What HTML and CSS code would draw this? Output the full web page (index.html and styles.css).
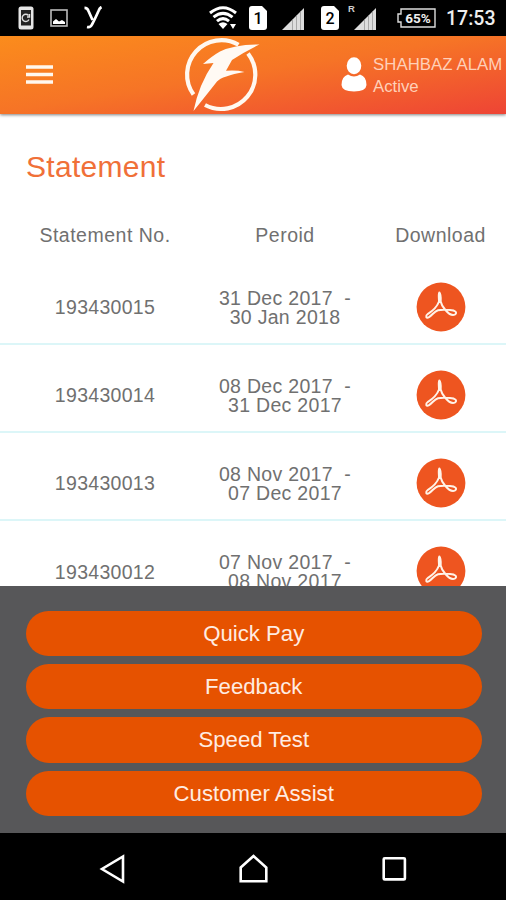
FILE: index.html
```html
<!DOCTYPE html>
<html lang="en">
<head>
<meta charset="utf-8">
<title>Statement</title>
<link rel="stylesheet" href="styles.css">
</head>
<body>
<svg class="defs" aria-hidden="true">
  <symbol id="pdf" viewBox="0 0 50 50">
    <circle cx="25" cy="25" r="24.4" fill="#ee5520"/>
    <path d="M23.300 10.500C22.300 12 23 16 23 19.500C21 25 16.500 29 12 31.800C9 34 10 36.800 13 35.200C16.500 33 18 29.500 22 28.200C26 27.300 30 27.800 34 28C39.500 28.300 41.500 30.500 39 32.500C35.500 34.500 31.500 30.500 29 27.500C26.500 24.500 25.200 22 24.700 19.500C24.900 16 24.600 12 23.300 10.500Z" fill="none" stroke="#fff3e8" stroke-width="2" stroke-linejoin="round"/>
  </symbol>
  <symbol id="signal" viewBox="0 0 22 22">
    <path d="M0 22L22 0V22Z" fill="#ddd"/>
    <path d="M10.500 11.500V22M14.500 7.500V22M18.500 3.500V22" stroke="#999" stroke-width=".8"/>
  </symbol>
</svg>
<div class="phone">
  <div class="status">
    <svg class="s-phone" viewBox="0 0 16 24"><rect x=".5" y=".5" width="15" height="23" rx="2.500" fill="#e6e6e6"/><rect x="3" y="4" width="10" height="15.500" fill="#222"/><path d="M10.500 9.500A3.600 3.600 0 1 0 11 13.500M11.500 8V11H9" fill="none" stroke="#ddd" stroke-width="1.400"/></svg>
    <svg class="s-image" viewBox="0 0 18 18"><rect x="1" y="1" width="16" height="16" fill="none" stroke="#bbb" stroke-width="1.600"/><path d="M3 15V12.500L6 10L9 12.500L12 11L15 13V15Z" fill="#fff"/></svg>
    <svg class="s-y" viewBox="0 0 20 23"><path d="M.5 1.800Q3.500 1.800 4.500 5L8.500 14M17.500 1Q15.500 2 14.500 5Q10.500 14 8 18.500Q6.500 21.800 3 21" fill="none" stroke="#fff" stroke-width="2.700"/></svg>
    <svg class="s-wifi" viewBox="0 0 28 24"><g fill="none" stroke="#fff" stroke-width="3"><path d="M1 7Q14 -3.500 27 7"/><path d="M4.500 11.200Q14 3.500 23.500 11.200"/><path d="M8 15.200Q14 10 20 15.200"/></g><path d="M9.500 18Q14 14.500 18.500 18L14 23Z M21 18H27L24 23Z" fill="#fff"/></svg>
    <svg class="s-sim1" viewBox="0 0 18 24"><path d="M3 0H13L18 5V21Q18 24 15 24H3Q0 24 0 21V3Q0 0 3 0Z" fill="#fff"/><text class="simno" x="9" y="18">1</text></svg>
    <svg class="s-sig1"><use href="#signal"/></svg>
    <svg class="s-sim2" viewBox="0 0 18 24"><path d="M3 0H13L18 5V21Q18 24 15 24H3Q0 24 0 21V3Q0 0 3 0Z" fill="#fff"/><text class="simno" x="9" y="18">2</text></svg>
    <span class="roam">R</span>
    <svg class="s-sig2"><use href="#signal"/></svg>
    <svg class="s-batt" viewBox="0 0 39 20"><path d="M4 1H38V19H4V14H1V6H4Z" fill="none" stroke="#ddd" stroke-width="1.400"/><text class="percent" x="21" y="15">65%</text></svg>
    <span class="clock">17:53</span>
  </div>
  <header class="header">
    <svg class="menu" viewBox="0 0 27 19"><path d="M0 2H27M0 9.500H27M0 17H27" stroke="#fff8ee" stroke-width="3.600"/></svg>
    <svg class="logo" viewBox="0 0 80 78">
      <g fill="none" stroke="#fff8f0" stroke-width="4.200"><path d="M11.500 58.500A34.300 34.300 0 0 1 56.500 8.800"/><path d="M66 17.500A34.300 34.300 0 0 1 23 69"/></g>
      <path d="M77.500 8.500Q53 8.500 38 15.500Q30 20 21 28L31.500 27Q17 48 11.500 75Q22 62 35 45.500Q40 40 62.500 36Q55 34 44 34.800L50 24Q62 16 77.500 8.500Z" fill="#fffaf4"/>
    </svg>
    <div class="user">
      <svg class="avatar" viewBox="0 0 26 35"><ellipse cx="13" cy="8.700" rx="7.300" ry="8.500" fill="#fff"/><path d="M7 17.500Q13 21.500 19 17.500Q25.500 19.500 25.500 28Q25 34.500 13 34.500Q1 34.500 .5 28Q.5 19.500 7 17.500Z" fill="#fff"/></svg>
      <div class="who"><div class="name">SHAHBAZ ALAM</div><div>Active</div></div>
    </div>
  </header>
  <main class="content">
    <h1>Statement</h1>
    <div class="row head"><span>Statement No.</span><span>Peroid</span><span class="dl">Download</span></div>
    <div class="row"><span>193430015</span><span class="period">31 Dec 2017  -
30 Jan 2018</span><span class="dl"><svg class="pdf"><use href="#pdf"/></svg></span></div>
    <div class="row"><span>193430014</span><span class="period">08 Dec 2017  -
31 Dec 2017</span><span class="dl"><svg class="pdf"><use href="#pdf"/></svg></span></div>
    <div class="row"><span>193430013</span><span class="period">08 Nov 2017  -
07 Dec 2017</span><span class="dl"><svg class="pdf"><use href="#pdf"/></svg></span></div>
    <div class="row"><span>193430012</span><span class="period">07 Nov 2017  -
08 Nov 2017</span><span class="dl"><svg class="pdf"><use href="#pdf"/></svg></span></div>
  </main>
  <footer class="actions">
    <button>Quick Pay</button>
    <button>Feedback</button>
    <button>Speed Test</button>
    <button>Customer Assist</button>
  </footer>
  <nav class="nav">
    <svg viewBox="0 0 30 30"><path d="M26 2.500V27.500L5 15Z"/></svg>
    <svg viewBox="0 0 30 30"><path d="M2.700 13.500L15.500 2L28.300 13.500V27.300H2.700Z"/></svg>
    <svg viewBox="0 0 30 30"><rect x="4.700" y="4.200" width="21.200" height="21.200" rx="1"/></svg>
  </nav>
</div>
</body>
</html>
```
FILE: styles.css
```css
* { box-sizing: border-box; }
body {
  margin: 0;
  font-family: "Liberation Sans", Arial, sans-serif;
  background: #fff;
}
.defs { position: absolute; width: 0; height: 0; }
.phone {
  width: 506px;
  height: 900px;
  display: flex;
  flex-direction: column;
  overflow: hidden;
}
svg { display: block; flex: none; }

.status {
  height: 35.5px;
  flex: none;
  background: #000;
  display: flex;
  align-items: center;
  color: #fff;
}
.s-phone { width: 16px; height: 24px; margin-left: 18px; }
.s-image { width: 18px; height: 18px; margin-left: 16px; }
.s-y { width: 20px; height: 23px; margin-left: 16px; }
.s-wifi { width: 28px; height: 24px; margin-left: 105px; }
.s-sim1 { width: 18px; height: 24px; margin-left: 12px; }
.s-sig1 { width: 22px; height: 22px; margin: 2px 0 0 15px; }
.s-sim2 { width: 18px; height: 24px; margin-left: 17px; }
.roam {
  width: 7px;
  margin: -18px 0 0 9px;
  font-size: 9.5px;
  font-weight: bold;
  color: #ccc;
}
.s-sig2 { width: 22px; height: 22px; margin: 2px 0 0 -1px; }
.s-batt { width: 39px; height: 20px; margin-left: 21px; }
.clock {
  margin: 2px 0 0 10px;
  font: 500 19.5px Roboto, sans-serif;
  color: #eee;
}
.simno { font: 500 16px Roboto, sans-serif; text-anchor: middle; fill: #000; }
.percent { font: bold 13.5px Roboto, sans-serif; text-anchor: middle; fill: #eee; }

.header {
  height: 78.5px;
  flex: none;
  display: flex;
  align-items: center;
  background: linear-gradient(171deg, #fb8c1c 0%, #f67426 48%, #ee4435 100%);
  box-shadow: 0 1px 3px rgba(0, 0, 0, .5);
  z-index: 1;
}
.menu { width: 27px; height: 19px; margin-left: 26px; }
.logo { width: 80px; height: 78px; margin-left: 129px; }
.user { display: flex; align-items: center; margin-left: 79px; }
.avatar { width: 26px; height: 35px; }
.who {
  margin: 2px 0 0 6px;
  color: #ffd0b8;
  font-size: 16.8px;
  line-height: 22px;
  white-space: nowrap;
}
.name { letter-spacing: .05px; }

.content {
  height: 472px;
  flex: none;
  overflow: hidden;
  color: #707070;
}
h1 {
  margin: 0;
  padding: 34px 0 0 26px;
  height: 86px;
  font-size: 30px;
  font-weight: normal;
  line-height: 38px;
  letter-spacing: .3px;
  color: #f07038;
}
.row {
  display: grid;
  grid-template-columns: 210px 150px 1fr;
  align-items: center;
  text-align: center;
  height: 88.1px;
  padding-top: 14px;
  border-bottom: 2px solid #dcf6f8;
  font-size: 19.5px;
  line-height: 18.6px;
  letter-spacing: .3px;
}
.row > span:not(.dl) { padding-top: 2px; }
.row.head {
  height: 56.5px;
  padding-top: 13px;
  border: 0;
  align-items: start;
  line-height: 44px;
  letter-spacing: .5px;
}
.row.head > span:not(.dl) { padding-top: 0; }
.period { white-space: pre; }
.dl { padding-left: 15px; }
.pdf { width: 50px; height: 50px; margin: 0 auto; }

.actions {
  height: 247px;
  flex: none;
  padding: 25px 24px 0 25.5px;
  background: #575759;
  display: flex;
  flex-direction: column;
  gap: 8px;
}
.actions button {
  height: 45.2px;
  border: 0;
  border-radius: 23px;
  padding: 0;
  background: #e65200;
  color: #ffece2;
  font: 22.2px/45px "Liberation Sans", Arial, sans-serif;
}

.nav {
  flex: 1;
  background: #000;
  display: flex;
  justify-content: center;
  gap: 111px;
  padding-top: 21px;
}
.nav svg { width: 30px; height: 30px; fill: none; stroke: #fff; stroke-width: 2.6; }
```
